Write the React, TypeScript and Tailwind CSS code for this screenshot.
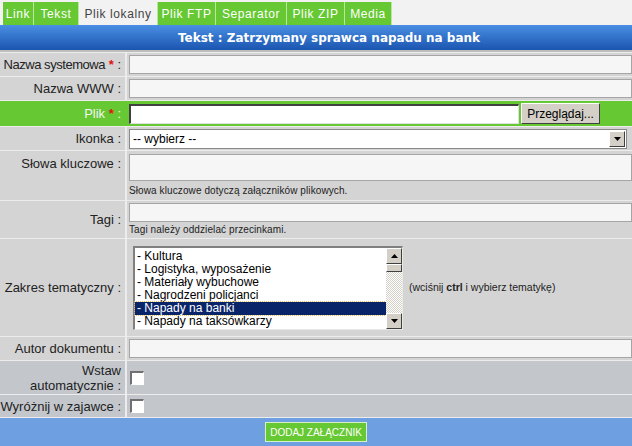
import React from "react";

const tabs: [string, number][] = [
  ["Link", 31],
  ["Tekst", 45],
  ["Plik lokalny", 79],
  ["Plik FTP", 58],
  ["Separator", 71],
  ["Plik ZIP", 58],
  ["Media", 47],
];

const topics = [
  "- Kultura",
  "- Logistyka, wyposażenie",
  "- Materiały wybuchowe",
  "- Nagrodzeni policjanci",
  "- Napady na banki",
  "- Napady na taksówkarzy",
];

function Star() {
  return <span className="font-bold text-[#e01010]">*</span>;
}

function Label({ children, bg = "bg-[#d4d4d4] text-[#222]", top }: { children: React.ReactNode; bg?: string; top?: boolean }) {
  return (
    <div
      className={`flex justify-end whitespace-nowrap pr-[4px] text-right text-[13px] leading-[15px] ${
        top ? "items-start pt-[5px]" : "items-center"
      } ${bg}`}
    >
      <div>{children}</div>
    </div>
  );
}

function TextBox({ className = "" }: { className?: string }) {
  return <div className={`h-[19px] border border-[#a5a5a5] bg-[#f6f6f6] ${className}`} />;
}

function Checkbox() {
  return (
    <div className="h-[14px] w-[14px] border-t-2 border-l-2 border-t-[#707070] border-l-[#707070] border-b border-r border-b-white border-r-white bg-white" />
  );
}

function ArrowBtn({ dir }: { dir: "up" | "down" }) {
  return (
    <div className="flex h-[16px] w-[16px] items-center justify-center border border-t-white border-l-white border-b-[#404040] border-r-[#404040] bg-[#d4d0c8]">
      <svg width="7" height="4" viewBox="0 0 7 4">
        {dir === "up" ? <path d="M3.5 0 L7 4 L0 4 Z" fill="#000" /> : <path d="M0 0 L7 0 L3.5 4 Z" fill="#000" />}
      </svg>
    </div>
  );
}

export default function App() {
  const row = "grid grid-cols-[125px_1fr] gap-x-[2px]";
  const cell = "bg-[#d4d4d4]";
  const blue = "bg-[#c3c7cc] text-[#222]";
  return (
    <div className="h-[446px] w-[632px] overflow-hidden bg-[#f2f2f2] font-['Liberation_Sans',sans-serif]">
      <div className="flex h-[25px] items-end pl-[3px] text-[12px]">
        {tabs.map(([t, w]) => (
          <div
            key={t}
            style={{ width: w }}
            className={`flex h-[23px] shrink-0 items-center justify-center border-r border-[#b9e6a0] tracking-[0.6px] ${
              t === "Plik lokalny" ? "bg-[#f2f2f2] text-[#444]" : "bg-[#66c833] text-white"
            }`}
          >
            {t}
          </div>
        ))}
      </div>
      <div className="flex h-[25px] items-center justify-center bg-gradient-to-b from-[#4a8fe3] to-[#1b55b0] pl-[26px] font-['DejaVu_Sans',sans-serif] text-[12px] font-bold text-white">
        Tekst : Zatrzymany sprawca napadu na bank
      </div>
      <div className="h-[2px] bg-[#bdbdbd]" />
      <div className="flex flex-col gap-y-px bg-[#ececec] pt-px">
        <div className={`${row} h-[23px]`}>
          <Label>
            <span className="tracking-[-0.45px]">Nazwa systemowa</span> <Star /> :
          </Label>
          <div className={`${cell} flex items-center pl-[2px]`}>
            <TextBox className="w-full" />
          </div>
        </div>
        <div className={`${row} h-[23px]`}>
          <Label>Nazwa WWW :</Label>
          <div className={`${cell} flex items-center pl-[2px]`}>
            <TextBox className="w-full" />
          </div>
        </div>
        <div className={`${row} h-[25px] bg-[#66c833]`}>
          <Label bg="bg-[#66c833] text-[#f4f4f4]">
            Plik <Star /> :
          </Label>
          <div className="flex items-center gap-[2px] bg-[#66c833] pl-[2px]">
            <div className="h-[20px] w-[390px] border-t-2 border-l-2 border-t-[#404040] border-l-[#404040] border-b border-r border-b-[#e0e0e0] border-r-[#e0e0e0] bg-white" />
            <div className="flex h-[21px] w-[79px] items-center justify-center border border-t-white border-l-white border-b-[#404040] border-r-[#404040] bg-[#d4d0c8] text-[12px] text-black">
              Przeglądaj...
            </div>
          </div>
        </div>
        <div className={`${row} h-[23px]`}>
          <Label>Ikonka :</Label>
          <div className={`${cell} flex items-center pl-[2px] pr-[5px]`}>
            <div className="flex h-[20px] w-full items-center justify-between border border-[#8a8a8a] bg-white pl-[3px] pr-px text-[12px] text-black">
              <span>-- wybierz --</span>
              <ArrowBtn dir="down" />
            </div>
          </div>
        </div>
        <div className={`${row} h-[49px]`}>
          <Label top>Słowa kluczowe :</Label>
          <div className={`${cell} flex flex-col pl-[2px] pt-[3px]`}>
            <div className="h-[27px] w-full border border-[#a5a5a5] bg-[#f6f6f6]" />
            <div className="mt-[3px] text-[10px] leading-[14px] tracking-[0.1px] text-[#222]">
              Słowa kluczowe dotyczą załączników plikowych.
            </div>
          </div>
        </div>
        <div className={`${row} h-[37px]`}>
          <Label>Tagi :</Label>
          <div className={`${cell} flex flex-col pl-[2px] pt-[2px]`}>
            <TextBox className="w-full" />
            <div className="mt-[2px] text-[10px] leading-[12px] tracking-[0.1px] text-[#222]">
              Tagi należy oddzielać przecinkami.
            </div>
          </div>
        </div>
        <div className={`${row} h-[97px]`}>
          <Label>Zakres tematyczny :</Label>
          <div className={`${cell} flex items-center gap-[6px] pl-[6px]`}>
            <div className="flex h-[84px] w-[270px] border-t-2 border-l-2 border-t-[#808080] border-l-[#808080] border-b border-r border-b-[#e8e8e8] border-r-[#e8e8e8] bg-white">
              <div className="flex-1 pt-[2px] text-[12px] leading-[13px] text-black">
                {topics.map((t) => (
                  <div
                    key={t}
                    className={`pl-[2px] ${
                      t === "- Napady na banki" ? "bg-[#0a246a] text-white outline-1 outline-dotted outline-[#f0c060]" : ""
                    }`}
                  >
                    {t}
                  </div>
                ))}
              </div>
              <div className="flex w-[16px] flex-col bg-[repeating-conic-gradient(#ffffff_0_25%,#d4d0c8_0_50%)] bg-[length:2px_2px]">
                <ArrowBtn dir="up" />
                <div className="h-[8px] w-[16px] border border-t-white border-l-white border-b-[#404040] border-r-[#404040] bg-[#d4d0c8]" />
                <div className="flex-1" />
                <ArrowBtn dir="down" />
              </div>
            </div>
            <div className="text-[10.5px] text-[#222]">
              (wciśnij <b>ctrl</b> i wybierz tematykę)
            </div>
          </div>
        </div>
        <div className={`${row} h-[23px]`}>
          <Label>Autor dokumentu :</Label>
          <div className={`${cell} flex items-center pl-[2px]`}>
            <TextBox className="w-full" />
          </div>
        </div>
        <div className={`${row} h-[33px]`}>
          <Label bg={blue}>
            Wstaw
            <br />
            automatycznie :
          </Label>
          <div className="flex items-center bg-[#c3c7cc] pl-[3px]">
            <Checkbox />
          </div>
        </div>
        <div className={`${row} h-[22px]`}>
          <Label bg={blue}>Wyróżnij w zajawce :</Label>
          <div className="flex items-center bg-[#c3c7cc] pl-[3px]">
            <Checkbox />
          </div>
        </div>
        <div className="flex h-[30px] items-start justify-center bg-[#6e9fe0] pt-[4px]">
          <div className="flex h-[20px] w-[102px] items-center justify-center border border-[#d8f0c8] bg-[#66c833] text-[10px] text-white">
            DODAJ ZAŁĄCZNIK
          </div>
        </div>
      </div>
    </div>
  );
}
